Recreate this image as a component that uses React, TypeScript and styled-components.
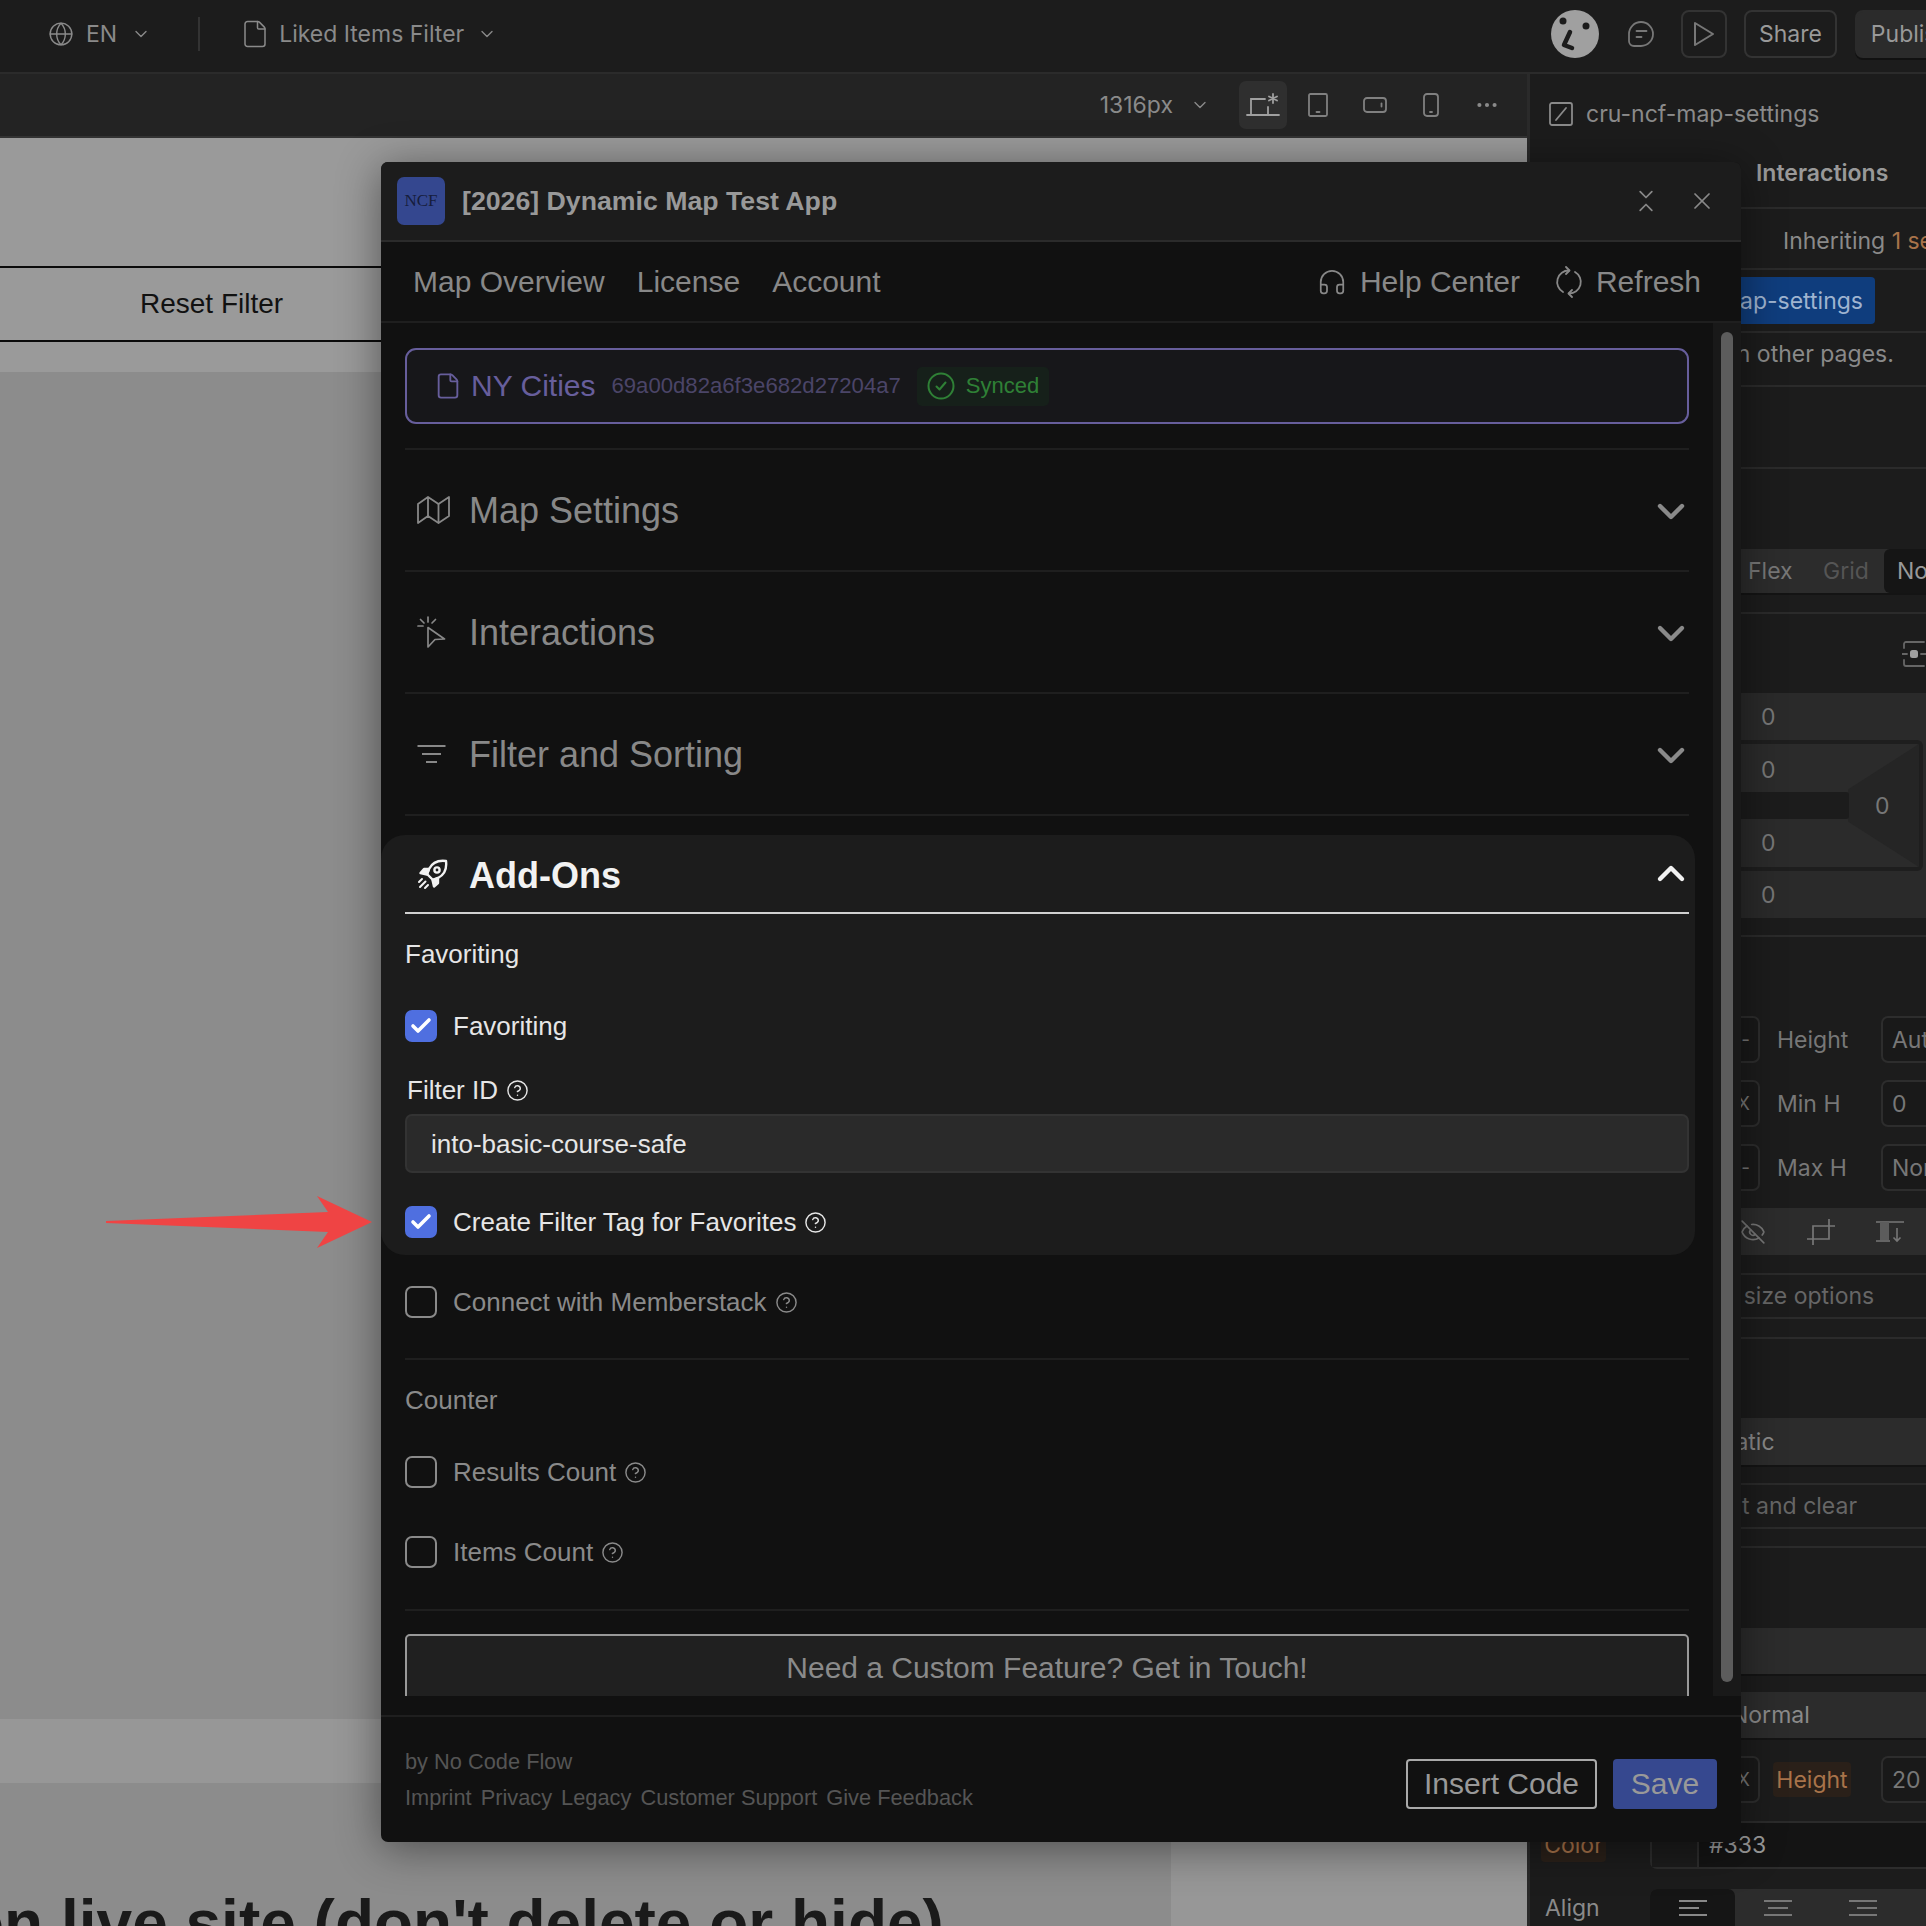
import React from "react";
import styled, { createGlobalStyle } from "styled-components";
import {
  Check,
  ChevronDown,
  ChevronsDownUp,
  CircleHelp,
  Ellipsis,
  EyeOff,
  File,
  Globe,
  Headphones,
  X,
} from "lucide-react";

const GlobalStyle = createGlobalStyle`
  html, body {
    margin: 0;
    padding: 0;
    background: #1c1c1c;
  }
  * {
    box-sizing: border-box;
  }
  svg {
    flex: none;
  }
`;

const Page = styled.div`
  position: relative;
  width: 1926px;
  height: 1926px;
  overflow: hidden;
  display: flex;
  flex-direction: column;
  font-family: Inter, "Liberation Sans", sans-serif;
  color: #8a8a8a;
`;

/* top bar */
const TopBar = styled.header`
  height: 74px;
  flex: none;
  display: flex;
  align-items: center;
  background: #1c1c1c;
  border-bottom: 2px solid #2b2b2b;
  padding: 0 0 5px 48px;
  font-size: 23px;
  white-space: nowrap;
`;

const TopGroup = styled.div<{ $gap?: number }>`
  display: flex;
  align-items: center;
  gap: ${(p) => p.$gap ?? 12}px;
`;

const TopDivider = styled.div`
  width: 2px;
  height: 34px;
  background: #333;
  margin: 0 40px 0 47px;
`;

const TopRight = styled.div`
  margin-left: auto;
  margin-right: -40px;
  display: flex;
  align-items: center;
`;

const OutlineBox = styled.div`
  height: 48px;
  display: flex;
  align-items: center;
  justify-content: center;
  border: 2px solid #333;
  border-radius: 8px;
  color: #999;
`;

const PlayBox = styled(OutlineBox)`
  width: 46px;
  margin-left: 26px;
`;

const ShareBox = styled(OutlineBox)`
  width: 93px;
  margin-left: 17px;
`;

const PublishBox = styled(OutlineBox)`
  width: 111px;
  margin-left: 18px;
  background: #2b2b2b;
  border-color: #2b2b2b;
  box-shadow: 0 2px 0 #111;
`;

const Body = styled.div`
  flex: 1;
  display: flex;
  min-height: 0;
`;

const Workspace = styled.div`
  width: 1527px;
  flex: none;
  display: flex;
  flex-direction: column;
`;

const SubBar = styled.div`
  height: 64px;
  flex: none;
  display: flex;
  align-items: center;
  justify-content: flex-end;
  background: #232323;
  border-bottom: 2px solid #333;
  padding-right: 14px;
  font-size: 23px;
  white-space: nowrap;
`;

const DeviceButton = styled.div<{ $active?: boolean; $width: number }>`
  width: ${(p) => p.$width}px;
  height: 48px;
  display: flex;
  align-items: center;
  justify-content: center;
  border-radius: 7px;
  background: ${(p) => (p.$active ? "#2f2f2f" : "transparent")};
`;

/* canvas behind the modal */
const Canvas = styled.main`
  flex: 1;
  display: flex;
  flex-direction: column;
  min-height: 0;
  background: #8c8c8c;
`;

const CanvasTop = styled.div`
  height: 128px;
  flex: none;
  background: #9a9a9a;
`;

const FilterRow = styled.div`
  height: 76px;
  flex: none;
  display: flex;
  align-items: center;
  padding-left: 140px;
  background: #9a9a9a;
  border-top: 2px solid #0b0b0b;
  border-bottom: 2px solid #0b0b0b;
  font-family: "Liberation Sans", sans-serif;
  font-size: 28px;
  color: #111;
`;

const CanvasGap = styled.div`
  height: 30px;
  flex: none;
  background: #9a9a9a;
`;

const CanvasMain = styled.div`
  flex: 1;
`;

const CanvasBand = styled.div`
  height: 64px;
  flex: none;
  background: #979797;
`;

const CanvasBottom = styled.div`
  height: 143px;
  flex: none;
  display: flex;
  overflow: hidden;
`;

const HeadingCell = styled.div`
  width: 1171px;
  flex: none;
  overflow: hidden;
`;

const SideCell = styled.div`
  flex: 1;
  background: #979797;
`;

const BigHeading = styled.h2`
  margin: 104px 0 0 -35px;
  font-family: "Liberation Sans", sans-serif;
  font-size: 64px;
  line-height: 72px;
  font-weight: 700;
  color: #1a1a1a;
  white-space: nowrap;
`;

/* right style panel */
const Panel = styled.aside`
  flex: 1;
  min-width: 0;
  display: flex;
  flex-direction: column;
  background: #1c1c1c;
  border-left: 3px solid #2a2a2a;
  font-size: 23px;
  white-space: nowrap;
  overflow: hidden;
`;

const Section = styled.div<{ $h: number; $pl?: number; $pb?: number; $pt?: number; $line?: boolean }>`
  height: ${(p) => p.$h}px;
  flex: none;
  display: flex;
  align-items: center;
  padding-left: ${(p) => p.$pl ?? 0}px;
  padding-bottom: ${(p) => p.$pb ?? 0}px;
  padding-top: ${(p) => p.$pt ?? 0}px;
  border-bottom: ${(p) => (p.$line ? "2px solid #2b2b2b" : "none")};
`;

const SelectorName = styled.span`
  margin: 0 110px 0 12px;
`;

const StrongTab = styled.span`
  font-weight: 600;
  color: #999;
`;

const Orange = styled.span`
  color: #a8734a;
`;

const BlueChip = styled.div`
  width: 345px;
  height: 47px;
  display: flex;
  align-items: center;
  justify-content: flex-end;
  padding-right: 12px;
  border-radius: 4px;
  background: #0f3d7d;
  color: #9fb4d0;
`;

const SegTrack = styled.div<{ $mt: number; $h: number }>`
  margin-top: ${(p) => p.$mt}px;
  height: ${(p) => p.$h}px;
  flex: none;
  display: flex;
  align-items: center;
  background: #2c2c2c;
  border-bottom: 2px solid #141414;
`;

const SegText = styled.span<{ $width: number; $dim?: boolean }>`
  width: ${(p) => p.$width}px;
  flex: none;
  color: ${(p) => (p.$dim ? "#555" : "#777")};
`;

const SegActive = styled.div`
  flex: 1;
  min-width: 0;
  height: 44px;
  display: flex;
  align-items: center;
  padding-left: 13px;
  border-radius: 6px 0 0 6px;
  background: #151515;
  color: #999;
`;

const SpacingBox = styled.div`
  height: 225px;
  flex: none;
  display: flex;
  flex-direction: column;
  background: #2a2a2a;
  color: #777;
`;

const SpacingValue = styled.div<{ $h: number; $pt?: number }>`
  position: relative;
  height: ${(p) => p.$h}px;
  flex: none;
  display: flex;
  align-items: center;
  padding-top: ${(p) => p.$pt ?? 0}px;
  padding-left: 231px;
`;

const SpacingInner = styled.div`
  position: relative;
  height: 131px;
  flex: none;
  width: 393px;
  background: #2b2b2b;
  border: 4px solid #1e1e1e;
  border-left: none;
  border-radius: 0 6px 6px 0;
  display: flex;
  flex-direction: column;
`;

const SpacingTriangle = styled.div`
  position: absolute;
  right: 0;
  top: 0;
  width: 71px;
  height: 123px;
  background: #252525;
  clip-path: polygon(100% 0, 100% 100%, 0 63%, 0 37%);
`;

const SpacingMiddle = styled.div`
  position: relative;
  height: 27px;
  flex: none;
  display: flex;
  align-items: center;
`;

const SpacingBar = styled.div`
  width: 319px;
  height: 27px;
  flex: none;
  background: #1c1c1c;
  border-radius: 0 3px 3px 0;
`;

const SpacingSide = styled.span`
  margin-left: 26px;
`;

const SizeRow = styled.div<{ $mt: number }>`
  margin-top: ${(p) => p.$mt}px;
  height: 47px;
  flex: none;
  display: flex;
  align-items: center;
`;

const SizeBox = styled.div<{ $width: number; $tag?: boolean }>`
  width: ${(p) => p.$width}px;
  height: 47px;
  flex: none;
  display: flex;
  align-items: center;
  justify-content: ${(p) => (p.$tag ? "flex-end" : "flex-start")};
  padding: 0 8px 0 9px;
  border: 2px solid #2d2d2d;
  border-radius: 7px;
  background: #191919;
  color: #777;
  font-size: ${(p) => (p.$tag ? 19 : 23)}px;
`;

const SizeLabel = styled.span<{ $width: number }>`
  width: ${(p) => p.$width}px;
  flex: none;
  padding-left: 17px;
  color: #777;
`;

const HeightTag = styled.span`
  width: 78px;
  height: 35px;
  flex: none;
  margin: 0 30px 0 13px;
  display: flex;
  align-items: center;
  justify-content: center;
  border-radius: 4px;
  background: #2a2019;
  color: #a8734a;
`;

const IconBar = styled.div<{ $mt: number }>`
  margin-top: ${(p) => p.$mt}px;
  height: 47px;
  flex: none;
  display: flex;
  align-items: center;
  padding-left: 210px;
  gap: 41px;
  background: #2c2c2c;
  color: #777;
`;

const WideBox = styled.div<{ $mt: number; $h: number; $pl: number; $solid?: boolean }>`
  margin-top: ${(p) => p.$mt}px;
  height: ${(p) => p.$h}px;
  flex: none;
  display: flex;
  align-items: center;
  padding-left: ${(p) => p.$pl}px;
  background: ${(p) => (p.$solid ? "#2c2c2c" : "transparent")};
  border-top: ${(p) => (p.$solid ? "none" : "2px solid #2b2b2b")};
  border-bottom: 2px solid ${(p) => (p.$solid ? "#141414" : "#2b2b2b")};
  color: ${(p) => (p.$solid ? "#8a8a8a" : "#666")};
`;

const PanelRule = styled.div<{ $mt: number }>`
  margin-top: ${(p) => p.$mt}px;
  height: 2px;
  flex: none;
  background: #2b2b2b;
`;

const ColorRow = styled.div`
  height: 46px;
  flex: none;
  display: flex;
  align-items: center;
  padding-left: 11px;
`;

const ColorTag = styled.span`
  width: 65px;
  height: 35px;
  flex: none;
  margin-top: -3px;
  display: flex;
  align-items: center;
  justify-content: center;
  background: #2a2019;
  color: #a8734a;
  border-radius: 4px;
`;

const ColorInput = styled.div`
  margin-left: 44px;
  flex: 1;
  height: 46px;
  display: flex;
  align-items: center;
  border: 2px solid #2d2d2d;
  border-right: none;
  border-top: none;
  border-radius: 0 0 0 7px;
  background: #141414;
`;

const ColorSwatch = styled.div`
  width: 47px;
  height: 100%;
  border-right: 2px solid #2d2d2d;
  background: #1c1c1c;
`;

const ColorText = styled.span`
  margin-left: 10px;
  color: #999;
`;

const AlignRow = styled.div`
  margin-top: 20px;
  flex: 1;
  display: flex;
  align-items: center;
  padding-left: 15px;
`;

const AlignLabel = styled.span`
  width: 105px;
  flex: none;
`;

const AlignTrack = styled.div`
  flex: 1;
  height: 100%;
  display: flex;
  background: #2c2c2c;
  border-radius: 7px 0 0 0;
`;

const AlignButton = styled.div<{ $active?: boolean }>`
  width: 85px;
  display: flex;
  align-items: center;
  justify-content: center;
  background: ${(p) => (p.$active ? "#151515" : "transparent")};
  border-radius: 7px 7px 0 0;
`;

/* modal */
const Modal = styled.section`
  position: absolute;
  left: 381px;
  top: 162px;
  width: 1360px;
  height: 1680px;
  display: flex;
  flex-direction: column;
  background: #111;
  border-radius: 7px;
  box-shadow: 0 6px 44px rgba(0, 0, 0, 0.45);
  font-family: "Liberation Sans", sans-serif;
  overflow: hidden;
`;

const ModalHeader = styled.div`
  height: 80px;
  flex: none;
  display: flex;
  align-items: center;
  padding: 0 25px 0 16px;
  background: #1c1c1c;
  border-bottom: 2px solid #2b2b2b;
`;

const LogoTile = styled.div`
  width: 48px;
  height: 48px;
  flex: none;
  display: flex;
  align-items: center;
  justify-content: center;
  border-radius: 7px;
  background: #34478f;
  color: #161d3c;
  font-family: "Liberation Serif", serif;
  font-size: 17px;
`;

const ModalTitle = styled.h1`
  margin: 0 0 0 17px;
  flex: 1;
  font-size: 26.7px;
  font-weight: 700;
  color: #999;
`;

const HeaderIcons = styled.div`
  display: flex;
  align-items: center;
  gap: 28px;
  color: #888;
`;

const TabBar = styled.nav`
  height: 81px;
  flex: none;
  display: flex;
  align-items: center;
  padding: 0 40px 0 32px;
  background: #111;
  border-bottom: 2px solid #1f1f1f;
  font-size: 30px;
  color: #888;
`;

const TabItem = styled.span<{ $mr?: number }>`
  display: flex;
  align-items: center;
  gap: 13px;
  margin-right: ${(p) => p.$mr ?? 0}px;
`;

const TabSpacer = styled.div`
  flex: 1;
`;

const ScrollArea = styled.div`
  height: 1373px;
  flex: none;
  display: flex;
`;

const ScrollContent = styled.div`
  width: 1332px;
  flex: none;
  padding: 25px 24px 0;
  overflow: hidden;
`;

const Gutter = styled.div`
  width: 28px;
  flex: none;
  padding: 9px 8px 14px;
  background: #191919;
`;

const Thumb = styled.div`
  width: 12px;
  height: 100%;
  border-radius: 6px;
  background: #5c5c5c;
`;

const DocCard = styled.div`
  height: 76px;
  display: flex;
  align-items: center;
  padding-left: 27px;
  border: 2px solid #675e9c;
  border-radius: 11px;
  background: #17171a;
  color: #675e9c;
`;

const DocName = styled.span`
  margin-left: 9px;
  font-size: 30px;
`;

const DocId = styled.span`
  margin-left: 16px;
  font-size: 22.15px;
  color: #4b4568;
`;

const SyncedPill = styled.div`
  height: 39px;
  margin-left: 16px;
  display: flex;
  align-items: center;
  gap: 11px;
  padding: 0 10px;
  border-radius: 5px;
  background: #16201a;
  font-size: 22px;
  color: #2f8036;
`;

const Rule = styled.div<{ $mt: number }>`
  margin-top: ${(p) => p.$mt}px;
  height: 2px;
  background: #1f1f1f;
`;

const AccordionRow = styled.div`
  height: 120px;
  display: flex;
  align-items: center;
  font-size: 36px;
  color: #888;
`;

const AccordionIcon = styled.div`
  width: 64px;
  flex: none;
  display: flex;
  padding-left: 12px;
`;

const AccordionTitle = styled.span`
  flex: 1;
  padding-top: 2px;
`;

const ChevronSlot = styled.div<{ $up?: boolean }>`
  margin: ${(p) => (p.$up ? "-3px" : "4px")} 3px 0 0;
  display: flex;
`;

const ActivePanel = styled.div`
  margin: 19px -6px 0 -24px;
  height: 420px;
  padding: 0 6px 0 24px;
  border-radius: 24px;
  background: #1c1c1c;
  color: #e6e6e6;
  font-size: 26px;
`;

const ActiveHeader = styled(AccordionRow)`
  height: 79px;
  padding-top: 2px;
  border-bottom: 2px solid #d0d0d0;
  color: #f2f2f2;
`;

const ActiveTitle = styled(AccordionTitle)`
  font-weight: 700;
`;

const GroupLabel = styled.div<{ $mt: number }>`
  margin-top: ${(p) => p.$mt}px;
  height: 30px;
  line-height: 30px;
  font-size: 26px;
`;

const CheckRow = styled.div<{ $mt: number; $muted?: boolean }>`
  margin-top: ${(p) => p.$mt}px;
  height: 32px;
  display: flex;
  align-items: center;
  font-size: 26px;
  color: ${(p) => (p.$muted ? "#8a8a8a" : "#e6e6e6")};
`;

const CheckBox = styled.div<{ $on?: boolean }>`
  width: 32px;
  height: 32px;
  flex: none;
  margin-right: 16px;
  display: flex;
  align-items: center;
  justify-content: center;
  border-radius: 7px;
  border: 2px solid ${(p) => (p.$on ? "#4f6fe0" : "#8a8a8a")};
  background: ${(p) => (p.$on ? "#4f6fe0" : "transparent")};
  color: #fff;
`;

const HelpMark = styled.span`
  display: inline-flex;
  margin-left: 8px;
`;

const FieldLabel = styled.div`
  margin: 33px 0 0 2px;
  height: 30px;
  display: flex;
  align-items: center;
  font-size: 26px;
`;

const FieldInput = styled.div`
  margin-top: 9px;
  height: 59px;
  display: flex;
  align-items: center;
  padding: 1px 0 0 24px;
  border: 2px solid #333;
  border-radius: 7px;
  background: #2a2a2a;
  font-size: 26px;
`;

const CounterLabel = styled(GroupLabel)`
  color: #8a8a8a;
`;

const CustomButton = styled.div`
  margin-top: 23px;
  height: 70px;
  padding-top: 12px;
  text-align: center;
  border: 2px solid #999;
  border-radius: 5px 5px 0 0;
  background: #202020;
  font-size: 30px;
  line-height: 40px;
  color: #8a8a8a;
`;

const ModalFooter = styled.footer`
  margin-top: 19px;
  flex: 1;
  display: flex;
  align-items: center;
  justify-content: space-between;
  padding: 0 24px;
  border-top: 2px solid #1f1f1f;
`;

const FooterLinks = styled.div`
  display: flex;
  flex-direction: column;
  gap: 11px;
  font-size: 21.8px;
  line-height: 25px;
  color: #555;
`;

const FooterRow = styled.div`
  display: flex;
  gap: 9px;
`;

const FooterActions = styled.div`
  margin-top: 9px;
  display: flex;
  gap: 16px;
`;

const InsertButton = styled.div`
  width: 191px;
  height: 50px;
  display: flex;
  align-items: center;
  justify-content: center;
  border: 2px solid #aaa;
  border-radius: 4px;
  font-size: 30px;
  color: #999;
`;

const SaveButton = styled.div`
  width: 104px;
  height: 50px;
  display: flex;
  align-items: center;
  justify-content: center;
  border-radius: 4px;
  background: #36488f;
  font-size: 30px;
  color: #999;
`;

const ArrowMark = styled.svg`
  position: absolute;
  left: 106px;
  top: 1196px;
`;

const Help = ({ color = "#8a8a8a" }: { color?: string }) => (
  <HelpMark>
    <CircleHelp size={23} strokeWidth={1.500} color={color} />
  </HelpMark>
);

const Chevron = ({ up, color }: { up?: boolean; color: string }) => (
  <ChevronSlot $up={up}>
    <svg width="30" height="20" viewBox="0 0 30 20" fill="none" stroke={color} strokeWidth="4.400" strokeLinecap="round" strokeLinejoin="round">
      {up ? <path d="M4 16 15 5l11 11" /> : <path d="M4 4l11 11L26 4" />}
    </svg>
  </ChevronSlot>
);

const MapIcon = () => (
  <svg width="33" height="29" viewBox="0 0 33 29" fill="none" stroke="#888" strokeWidth="1.800" strokeLinejoin="round">
    <path d="M1 8 11 1l10.500 7L32 1v19l-10.500 7L11 20 1 27z" />
    <path d="M11 1v19M21.500 8v19" />
  </svg>
);

const ClickIcon = () => (
  <svg width="29" height="32" viewBox="0 0 29 32" fill="none" stroke="#888" strokeWidth="1.700" strokeLinecap="round" strokeLinejoin="round">
    <path d="M11 11.500 27.500 23l-9.500 0.500L11 31z" />
    <path d="M11 1v5M3.500 3.500 7 7M18.500 3.500 15 7M1 10h5" />
  </svg>
);

const FilterIcon = () => (
  <svg width="29" height="20" viewBox="0 0 29 20" fill="none" stroke="#888" strokeWidth="2">
    <path d="M0.500 2h28M5 10h19M9 18h11" />
  </svg>
);

const RocketIcon = () => (
  <svg width="31" height="31" viewBox="0 0 31 31" fill="none" stroke="#f2f2f2" strokeWidth="2.400" strokeLinecap="round" strokeLinejoin="round">
    <path d="M29 2c-8-1-14 2-17 8l-2 5 6 6 5-2c6-3 9-9 8-17z" />
    <circle cx="20" cy="11" r="2.600" />
    <path d="M12 10H7l-3.500 4 6.500 1.500zM21 19v5l-4 3.500L15.500 21z" fill="#f2f2f2" />
    <path d="M5 20l-3 3M8.500 22.500 3 28M11 26l-3 3" strokeWidth="2" />
  </svg>
);

const RefreshIcon = () => (
  <svg width="28" height="32" viewBox="0 0 28 32" fill="none" stroke="#888" strokeWidth="1.800" strokeLinecap="round" strokeLinejoin="round">
    <path d="M14 4.500A11.500 11.500 0 0 0 8 26" />
    <path d="M14 27.500A11.500 11.500 0 0 0 20 6" />
    <path d="M11 1l3.500 3.500L11 8M17 24l-3.500 3.500L17 31" />
  </svg>
);

const DeviceDesk = () => (
  <svg width="34" height="24" viewBox="0 0 34 24" fill="none" stroke="#a0a0a0" strokeWidth="1.800" strokeLinecap="round">
    <path d="M1 22h32M5 22V6h14M22 14v8" />
    <path d="M27 1v9M23 3.500l8 4M31 3.500l-8 4" />
  </svg>
);

const DeviceTablet = () => (
  <svg width="20" height="24" viewBox="0 0 20 24" fill="none" stroke="#808080" strokeWidth="1.800" strokeLinecap="round">
    <rect x="1" y="1" width="18" height="22" rx="1.500" />
    <path d="M8.500 19h3" />
  </svg>
);

const DeviceLandscape = () => (
  <svg width="24" height="16" viewBox="0 0 24 16" fill="none" stroke="#808080" strokeWidth="1.800" strokeLinecap="round">
    <rect x="1" y="1" width="22" height="14" rx="3" />
    <path d="M18.500 6.500v3" />
  </svg>
);

const DevicePhone = () => (
  <svg width="16" height="24" viewBox="0 0 16 24" fill="none" stroke="#808080" strokeWidth="1.800" strokeLinecap="round">
    <rect x="1" y="1" width="14" height="22" rx="3" />
    <path d="M7 19h2" />
  </svg>
);

const Avatar = () => (
  <svg width="48" height="48" viewBox="0 0 48 48">
    <circle cx="24" cy="24" r="24" fill="#a0a0a0" />
    <circle cx="12" cy="11" r="3.500" fill="#1c1c1c" />
    <circle cx="35" cy="16" r="3.500" fill="#1c1c1c" />
    <path d="M19 22l-6 13 8 3" fill="none" stroke="#1c1c1c" strokeWidth="4.500" strokeLinecap="round" strokeLinejoin="round" />
  </svg>
);

const CommentIcon = () => (
  <svg width="28" height="28" viewBox="0 0 28 28" fill="none" stroke="#777" strokeWidth="1.800" strokeLinecap="round" style={{ marginLeft: 28 }}>
    <path d="M14 2a12 12 0 0 1 0 24H7a5 5 0 0 1-5-5v-7A12 12 0 0 1 14 2z" />
    <path d="M9.500 11h10M9.500 17h5" />
  </svg>
);

const PlayIcon = () => (
  <svg width="22" height="26" viewBox="0 0 22 26" fill="none" stroke="#777" strokeWidth="2" strokeLinejoin="round">
    <path d="M2 2l18 11L2 24z" />
  </svg>
);

const SelectorIcon = () => (
  <svg width="26" height="26" viewBox="0 0 26 26" fill="none" stroke="#8a8a8a" strokeWidth="1.800" strokeLinecap="round">
    <rect x="2" y="2" width="22" height="22" rx="2" />
    <path d="M8 19 18 7" />
  </svg>
);

const CenterIcon = () => (
  <svg width="24" height="26" viewBox="0 0 24 26" fill="none" stroke="#666" strokeWidth="1.800" strokeLinecap="round">
    <path d="M2 7V3a2 2 0 0 1 2-2h18M2 19v4a2 2 0 0 0 2 2h18" />
    <path d="M0 13h5M19 13h5" />
    <rect x="8" y="9" width="8" height="8" rx="2.500" fill="#a0a0a0" stroke="none" />
  </svg>
);

const CropFrameIcon = () => (
  <svg width="28" height="26" viewBox="0 0 28 26" fill="none" stroke="#777" strokeWidth="1.700">
    <path d="M6 7h16v13H6z" />
    <path d="M0 20h6v6M22 7h6M22 7V0" />
  </svg>
);

const OverflowIcon = () => (
  <svg width="28" height="22" viewBox="0 0 28 22" fill="none" stroke="#777" strokeWidth="1.600">
    <path d="M0 1h28M0 20h14" />
    <rect x="4" y="1" width="9" height="18" fill="#5c5c5c" stroke="none" />
    <path d="M21 7v13M17.500 16.500 21 20l3.500-3.500" />
  </svg>
);

const AlignIcon = ({ kind, color }: { kind: "left" | "center" | "right"; color: string }) => {
  const d =
    kind === "left"
      ? "M0 2h28M0 9h20M0 16h28"
      : kind === "center"
      ? "M0 2h28M4 9h20M0 16h28"
      : "M0 2h28M8 9h20M0 16h28";
  return (
    <svg width="28" height="18" viewBox="0 0 28 18" fill="none" stroke={color} strokeWidth="1.800">
      <path d={d} />
    </svg>
  );
};

const SyncedIcon = () => (
  <svg width="28" height="28" viewBox="0 0 28 28" fill="none" stroke="#2f8036" strokeWidth="2" strokeLinecap="round" strokeLinejoin="round">
    <circle cx="14" cy="14" r="12.500" />
    <path d="M9.500 14.500l3 3 6-7" />
  </svg>
);

export default function App() {
  return (
    <Page>
      <GlobalStyle />
      <TopBar>
        <TopGroup>
          <Globe size={26} strokeWidth={1.300} />
          <span>EN</span>
          <ChevronDown size={20} strokeWidth={1.600} style={{ marginLeft: 2 }} />
        </TopGroup>
        <TopDivider />
        <TopGroup $gap={9}>
          <File size={30} strokeWidth={1.200} />
          <span>Liked Items Filter</span>
          <ChevronDown size={20} strokeWidth={1.600} style={{ marginLeft: 4 }} />
        </TopGroup>
        <TopRight>
          <Avatar />
          <CommentIcon />
          <PlayBox>
            <PlayIcon />
          </PlayBox>
          <ShareBox>Share</ShareBox>
          <PublishBox>Publish</PublishBox>
        </TopRight>
      </TopBar>

      <Body>
        <Workspace>
          <SubBar>
            <span>1316px</span>
            <ChevronDown size={20} strokeWidth={1.600} style={{ margin: "0 29px 0 17px" }} />
            <DeviceButton $active $width={48}>
              <DeviceDesk />
            </DeviceButton>
            <DeviceButton $width={62}>
              <DeviceTablet />
            </DeviceButton>
            <DeviceButton $width={52}>
              <DeviceLandscape />
            </DeviceButton>
            <DeviceButton $width={60}>
              <DevicePhone />
            </DeviceButton>
            <DeviceButton $width={52}>
              <Ellipsis size={26} strokeWidth={1.800} />
            </DeviceButton>
          </SubBar>
          <Canvas>
            <CanvasTop />
            <FilterRow>Reset Filter</FilterRow>
            <CanvasGap />
            <CanvasMain />
            <CanvasBand />
            <CanvasBottom>
              <HeadingCell>
                <BigHeading>on live site (don't delete or hide)</BigHeading>
              </HeadingCell>
              <SideCell />
            </CanvasBottom>
          </Canvas>
        </Workspace>

        <Panel>
          <Section $h={84} $pl={18} $pb={4}>
            <SelectorIcon />
            <SelectorName>cru-ncf-map-settings</SelectorName>
            <Ellipsis size={24} />
          </Section>
          <Section $h={51} $pl={226} $pb={20} $line>
            <StrongTab>Interactions</StrongTab>
          </Section>
          <Section $h={61} $pl={253} $pt={4} $line>
            <span>
              Inheriting <Orange>1 selector</Orange>
            </span>
          </Section>
          <Section $h={63} $line>
            <BlueChip>cru-ncf-map-settings</BlueChip>
          </Section>
          <Section $h={54} $pl={193} $pb={10} $line>
            <span>on other pages.</span>
          </Section>
          <Section $h={82} $line />
          <SegTrack $mt={80} $h={46}>
            <SegText $width={218} />
            <SegText $width={75}>Flex</SegText>
            <SegText $width={61} $dim>
              Grid
            </SegText>
            <SegActive>None</SegActive>
          </SegTrack>
          <PanelRule $mt={17} />
          <Section $h={79} $pl={372}>
            <CenterIcon />
          </Section>
          <SpacingBox>
            <SpacingValue $h={47}>0</SpacingValue>
            <SpacingInner>
              <SpacingTriangle />
              <SpacingValue $h={48} $pt={4}>
                0
              </SpacingValue>
              <SpacingMiddle>
                <SpacingBar />
                <SpacingSide>0</SpacingSide>
              </SpacingMiddle>
              <SpacingValue $h={48}>0</SpacingValue>
            </SpacingInner>
            <SpacingValue $h={47}>0</SpacingValue>
          </SpacingBox>
          <PanelRule $mt={17} />
          <SizeRow $mt={79}>
            <SizeBox $width={230} $tag>
              -
            </SizeBox>
            <SizeLabel $width={121}>Height</SizeLabel>
            <SizeBox $width={60}>Auto</SizeBox>
          </SizeRow>
          <SizeRow $mt={17}>
            <SizeBox $width={230} $tag>
              PX
            </SizeBox>
            <SizeLabel $width={121}>Min H</SizeLabel>
            <SizeBox $width={60}>0</SizeBox>
          </SizeRow>
          <SizeRow $mt={17}>
            <SizeBox $width={230} $tag>
              -
            </SizeBox>
            <SizeLabel $width={121}>Max H</SizeLabel>
            <SizeBox $width={60}>None</SizeBox>
          </SizeRow>
          <IconBar $mt={17}>
            <EyeOff size={26} strokeWidth={1.500} />
            <CropFrameIcon />
            <OverflowIcon />
          </IconBar>
          <WideBox $mt={18} $h={46} $pl={151}>
            More size options
          </WideBox>
          <PanelRule $mt={18} />
          <WideBox $mt={79} $h={49} $pl={183} $solid>
            Static
          </WideBox>
          <WideBox $mt={16} $h={46} $pl={166}>
            Float and clear
          </WideBox>
          <PanelRule $mt={17} />
          <WideBox $mt={80} $h={48} $pl={100} $solid />
          <WideBox $mt={16} $h={48} $pl={201} $solid>
            Normal
          </WideBox>
          <SizeRow $mt={16}>
            <SizeBox $width={230} $tag>
              PX
            </SizeBox>
            <HeightTag>Height</HeightTag>
            <SizeBox $width={60}>20</SizeBox>
          </SizeRow>
          <PanelRule $mt={18} />
          <ColorRow>
            <ColorTag>Color</ColorTag>
            <ColorInput>
              <ColorSwatch />
              <ColorText>#333</ColorText>
            </ColorInput>
          </ColorRow>
          <AlignRow>
            <AlignLabel>Align</AlignLabel>
            <AlignTrack>
              <AlignButton $active>
                <AlignIcon kind="left" color="#888" />
              </AlignButton>
              <AlignButton>
                <AlignIcon kind="center" color="#777" />
              </AlignButton>
              <AlignButton>
                <AlignIcon kind="right" color="#777" />
              </AlignButton>
            </AlignTrack>
          </AlignRow>
        </Panel>
      </Body>

      <Modal>
        <ModalHeader>
          <LogoTile>NCF</LogoTile>
          <ModalTitle>[2026] Dynamic Map Test App</ModalTitle>
          <HeaderIcons>
            <ChevronsDownUp size={28} strokeWidth={1.500} />
            <X size={28} strokeWidth={1.500} />
          </HeaderIcons>
        </ModalHeader>

        <TabBar>
          <TabItem $mr={32}>Map Overview</TabItem>
          <TabItem $mr={32}>License</TabItem>
          <TabItem>Account</TabItem>
          <TabSpacer />
          <TabItem $mr={35}>
            <Headphones size={30} strokeWidth={1.400} />
            Help Center
          </TabItem>
          <TabItem>
            <RefreshIcon />
            Refresh
          </TabItem>
        </TabBar>

        <ScrollArea>
          <ScrollContent>
            <DocCard>
              <File size={28} strokeWidth={1.600} />
              <DocName>NY Cities</DocName>
              <DocId>69a00d82a6f3e682d27204a7</DocId>
              <SyncedPill>
                <SyncedIcon />
                Synced
              </SyncedPill>
            </DocCard>
            <Rule $mt={24} />
            <AccordionRow>
              <AccordionIcon>
                <MapIcon />
              </AccordionIcon>
              <AccordionTitle>Map Settings</AccordionTitle>
              <Chevron color="#8a8a8a" />
            </AccordionRow>
            <Rule $mt={0} />
            <AccordionRow>
              <AccordionIcon>
                <ClickIcon />
              </AccordionIcon>
              <AccordionTitle>Interactions</AccordionTitle>
              <Chevron color="#8a8a8a" />
            </AccordionRow>
            <Rule $mt={0} />
            <AccordionRow>
              <AccordionIcon>
                <FilterIcon />
              </AccordionIcon>
              <AccordionTitle>Filter and Sorting</AccordionTitle>
              <Chevron color="#8a8a8a" />
            </AccordionRow>
            <Rule $mt={0} />

            <ActivePanel>
              <ActiveHeader>
                <AccordionIcon>
                  <RocketIcon />
                </AccordionIcon>
                <ActiveTitle>Add-Ons</ActiveTitle>
                <Chevron up color="#f2f2f2" />
              </ActiveHeader>
              <GroupLabel $mt={25}>Favoriting</GroupLabel>
              <CheckRow $mt={41}>
                <CheckBox $on>
                  <Check size={24} strokeWidth={3.600} />
                </CheckBox>
                Favoriting
              </CheckRow>
              <FieldLabel>
                Filter ID
                <Help color="#e6e6e6" />
              </FieldLabel>
              <FieldInput>into-basic-course-safe</FieldInput>
              <CheckRow $mt={33}>
                <CheckBox $on>
                  <Check size={24} strokeWidth={3.600} />
                </CheckBox>
                Create Filter Tag for Favorites
                <Help color="#e6e6e6" />
              </CheckRow>
            </ActivePanel>

            <CheckRow $mt={31} $muted>
              <CheckBox />
              Connect with Memberstack
              <Help />
            </CheckRow>
            <Rule $mt={40} />
            <CounterLabel $mt={25}>Counter</CounterLabel>
            <CheckRow $mt={41} $muted>
              <CheckBox />
              Results Count
              <Help />
            </CheckRow>
            <CheckRow $mt={48} $muted>
              <CheckBox />
              Items Count
              <Help />
            </CheckRow>
            <Rule $mt={41} />
            <CustomButton>Need a Custom Feature? Get in Touch!</CustomButton>
          </ScrollContent>
          <Gutter>
            <Thumb />
          </Gutter>
        </ScrollArea>

        <ModalFooter>
          <FooterLinks>
            <span>by No Code Flow</span>
            <FooterRow>
              <span>Imprint</span>
              <span>Privacy</span>
              <span>Legacy</span>
              <span>Customer Support</span>
              <span>Give Feedback</span>
            </FooterRow>
          </FooterLinks>
          <FooterActions>
            <InsertButton>Insert Code</InsertButton>
            <SaveButton>Save</SaveButton>
          </FooterActions>
        </ModalFooter>
      </Modal>

      <ArrowMark width="267" height="52" viewBox="0 0 267 52">
        <polygon points="0,25 222,16 211,0 266,26 211,52 222,36 0,27" fill="#ef4444" />
      </ArrowMark>
    </Page>
  );
}
